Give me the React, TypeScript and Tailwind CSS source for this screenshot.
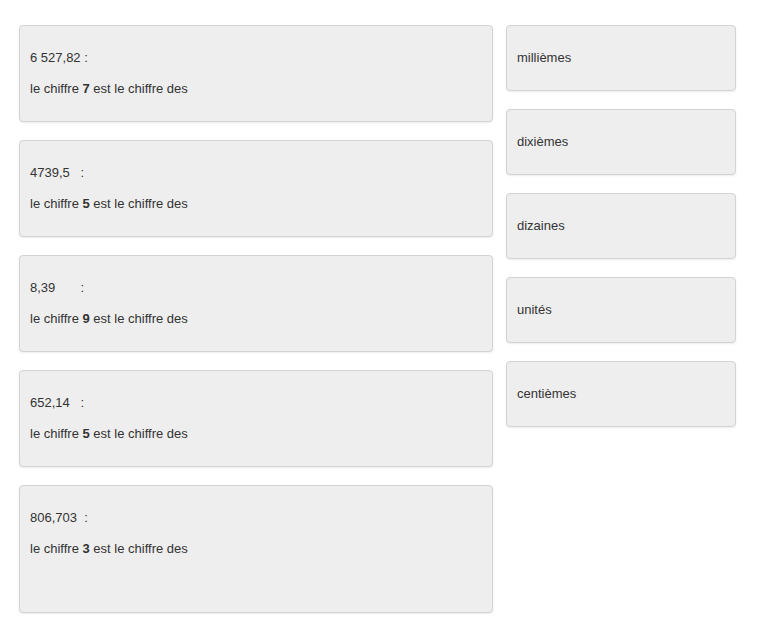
const questions = [
  { num: '6 527,82 :', digit: '7', tall: false },
  { num: '4739,5   :', digit: '5', tall: false },
  { num: '8,39       :', digit: '9', tall: false },
  { num: '652,14   :', digit: '5', tall: false },
  { num: '806,703  :', digit: '3', tall: true },
];

const answers = ['millièmes', 'dixièmes', 'dizaines', 'unités', 'centièmes'];

export default function App() {
  return (
    <div
      className="min-h-[620px] bg-white pl-[19px] pt-[25px] text-[13px] text-[#333]"
      style={{ fontFamily: '"Liberation Sans", Arial, Helvetica, sans-serif' }}
    >
      <div className="flex items-start gap-[13px]">
        {/* questions */}
        <div className="flex w-[474px] flex-col gap-[18px]">
          {questions.map((q, i) => (
            <div
              key={i}
              className={`rounded-[4px] border border-[#d3d3d3] bg-[#eeeeee] pl-[10px] pt-[22px] shadow-[0_1px_2px_rgba(0,0,0,0.08)] ${
                q.tall ? 'h-[128px]' : 'h-[97px]'
              }`}
            >
              <p className="whitespace-pre leading-5">{q.num}</p>
              <p className="mt-[11px] leading-5">
                le chiffre <b>{q.digit}</b> est le chiffre des
              </p>
            </div>
          ))}
        </div>

        {/* réponses */}
        <div className="flex w-[230px] flex-col gap-[18px]">
          {answers.map((a) => (
            <div
              key={a}
              className="h-[66px] rounded-[4px] border border-[#d3d3d3] bg-[#eeeeee] pl-[10px] pt-[22px] leading-5 shadow-[0_1px_2px_rgba(0,0,0,0.08)]"
            >
              {a}
            </div>
          ))}
        </div>
      </div>
    </div>
  );
}
